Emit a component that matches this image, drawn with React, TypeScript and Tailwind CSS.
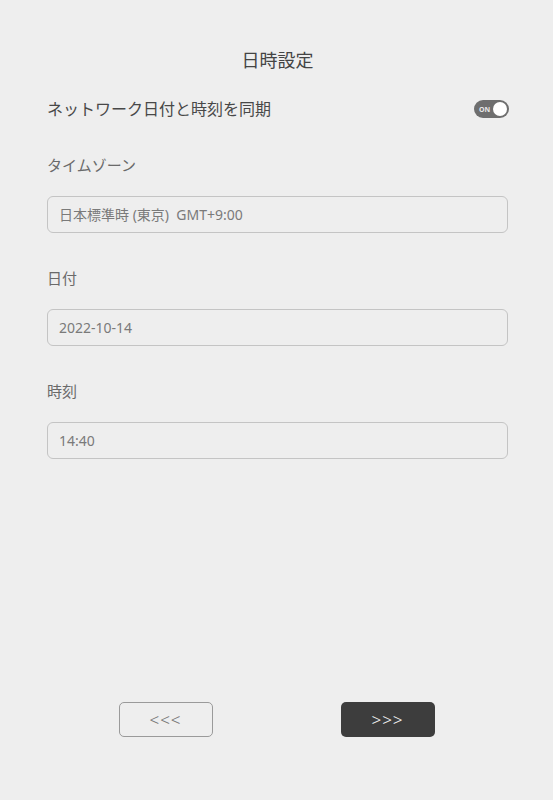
const FONT = "font-['Noto_Sans','Noto_Sans_CJK_JP',sans-serif]";

type FieldProps = {
  label: string;
  value: string;
  top: string;
};

function Field({ label, value, top }: FieldProps) {
  return (
    <div className={`flex flex-col ${top}`}>
      <div className="text-[15px] leading-[22px] text-[#6a6a6a]">{label}</div>
      <div className="mt-[20px] flex h-[37px] items-center whitespace-pre rounded-[6px] border border-[#c4c4c4] px-[11px] text-[14px] text-[#7a7a7a]">
        {value}
      </div>
    </div>
  );
}

function Toggle() {
  return (
    <div className="-mr-[1px] flex h-[18px] w-[35px] items-center justify-between rounded-full bg-[#6e6e6e] pl-[5px] pr-[2px]">
      <span className="text-[7px] font-bold leading-none text-[#e8e8e8]">ON</span>
      <span className="h-[14px] w-[14px] rounded-full bg-white" />
    </div>
  );
}

export default function App() {
  return (
    <div className={`flex h-[800px] w-[553px] flex-col bg-[#eeeeee] pl-[47px] pr-[45px] ${FONT}`}>
      {/* ヘッダー */}
      <div className="mt-[47px] text-center text-[18px] leading-[26px] text-[#444]">日時設定</div>

      {/* 同期スイッチ */}
      <div className="mt-[25px] flex items-center justify-between">
        <span className="text-[16px] leading-[22px] text-[#484848]">ネットワーク日付と時刻を同期</span>
        <Toggle />
      </div>

      <Field label="タイムゾーン" value="日本標準時 (東京)  GMT+9:00" top="mt-[34px]" />
      <Field label="日付" value="2022-10-14" top="mt-[34px]" />
      <Field label="時刻" value="14:40" top="mt-[34px]" />

      {/* ナビゲーション */}
      <div className="mt-auto mb-[63px] flex justify-center gap-[128px] pr-[2px]">
        <button className="flex h-[35px] w-[94px] items-center justify-center rounded-[5px] border border-[#9a9a9a] text-[17px] font-light tracking-[1px] text-[#777]">
          &lt;&lt;&lt;
        </button>
        <button className="flex h-[35px] w-[94px] items-center justify-center rounded-[5px] bg-[#3d3d3d] text-[17px] font-light tracking-[1px] text-[#f2f2f2]">
          &gt;&gt;&gt;
        </button>
      </div>
    </div>
  );
}
